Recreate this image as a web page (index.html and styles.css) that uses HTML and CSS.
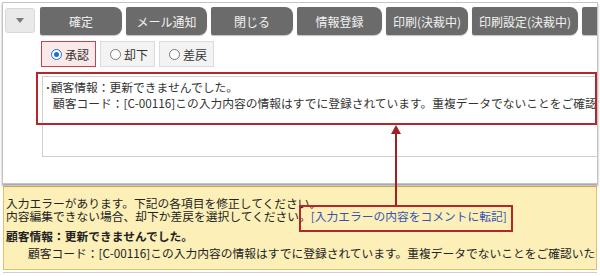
FILE: index.html
```html
<!DOCTYPE html>
<html lang="ja">
<head>
  <meta charset="UTF-8">
  <title>承認</title>
  <link rel="stylesheet" href="styles.css">
</head>
<body>
  <div class="page">
    <div class="panel">
      <div class="toolbar">
        <button class="menu-toggle" type="button">
          <svg width="8" height="5" viewBox="0 0 8 5"><path d="M0 0h8L4 5z" fill="#7a7a7a"/></svg>
        </button>
        <button class="action w-82" type="button">確定</button>
        <button class="action w-81" type="button">メール通知</button>
        <button class="action w-82" type="button">閉じる</button>
        <button class="action w-85" type="button">情報登録</button>
        <button class="action w-82" type="button">印刷(決裁中)</button>
        <button class="action w-106" type="button">印刷設定(決裁中)</button>
        <button class="action w-82" type="button">差戻</button>
      </div>

      <div class="decision">
        <label class="choice is-checked"><span class="radio"></span>承認</label>
        <label class="choice"><span class="radio"></span>却下</label>
        <label class="choice"><span class="radio"></span>差戻</label>
      </div>

      <div class="comment">
        <p>･顧客情報：更新できませんでした。</p>
        <p class="indent">顧客コード：[C-00116]この入力内容の情報はすでに登録されています。重複データでないことをご確認いただけますか。</p>
      </div>
    </div>

    <div class="notice">
      <p class="notice-lead">入力エラーがあります。下記の各項目を修正してください。<br>内容編集できない場合、却下か差戻を選択してください。<a class="copy-link" href="#">[入力エラーの内容をコメントに転記]</a></p>
      <p class="notice-detail"><strong>顧客情報：更新できませんでした。</strong><br><span class="indent">顧客コード：[C-00116]この入力内容の情報はすでに登録されています。重複データでないことをご確認いただけますか。</span></p>
    </div>

    <div class="next-panel"></div>

    <!-- annotation overlay -->
    <div class="callout callout-comment"></div>
    <div class="callout callout-link"></div>
    <div class="callout-line"></div>
    <div class="callout-head"></div>
  </div>
</body>
</html>
```

FILE: styles.css
```css
body {
  margin: 0;
  background: #fff;
  color: #333;
  font-family: "Noto Sans CJK JP", "Noto Sans", sans-serif;
  font-size: 11.75px;
  overflow: hidden;
}

p {
  margin: 0;
}

.page {
  position: relative;
  width: 600px;
  height: 276px;
  overflow: hidden;
}

.panel {
  box-sizing: border-box;
  width: 596px;
  height: 182px;
  margin: 2px 0 0 2px;
  border: 1px solid #c4c4c4;
  box-shadow: 0 2px 2px rgba(0, 0, 0, 0.35);
  overflow: hidden;
  position: relative;
}

.toolbar {
  display: flex;
  align-items: flex-start;
  gap: 4px;
  padding: 4px 0 0 2px;
  white-space: nowrap;
}

.menu-toggle {
  flex: none;
  width: 30px;
  height: 25px;
  margin: 1px 1px 0 0;
  padding: 0;
  border: 1px solid #d8d8d8;
  border-radius: 3px;
  background: #e9e9e9;
  display: flex;
  align-items: center;
  justify-content: center;
}

.action {
  flex: none;
  height: 28px;
  padding: 0;
  border: none;
  border-radius: 2px 8px 8px 2px;
  background: #6b6b6b;
  color: #f2f2f2;
  font-family: inherit;
  font-size: 12px;
  box-shadow: 0 1px 1px rgba(0, 0, 0, 0.25);
}

.w-81 { width: 81px; }
.w-82 { width: 82px; }
.w-85 { width: 85px; }
.w-106 { width: 106px; }

.decision {
  display: flex;
  gap: 4px;
  margin-top: 6px;
  padding-left: 38px;
}

.choice {
  box-sizing: border-box;
  width: 55px;
  height: 26px;
  display: flex;
  align-items: center;
  gap: 3px;
  padding-left: 9px;
  border: 1px solid #dcdcdc;
  background: #f3f3f3;
  font-size: 12px;
  color: #333;
}

.choice.is-checked {
  border-color: #c9434a;
  background: #fbe8e8;
}

.radio {
  box-sizing: border-box;
  width: 11px;
  height: 11px;
  border: 1px solid #777;
  border-radius: 50%;
  background: #fff;
  position: relative;
}

.is-checked .radio {
  border-color: #1f6fd6;
}

.is-checked .radio::after {
  content: "";
  position: absolute;
  top: 2px;
  left: 2px;
  width: 5px;
  height: 5px;
  border-radius: 50%;
  background: #1f6fd6;
}

.comment {
  box-sizing: border-box;
  width: 600px;
  height: 81px;
  margin: 9px 0 0 39px;
  padding: 2px 0 0 2px;
  border: 1px solid #cfcfcf;
  line-height: 16px;
  white-space: nowrap;
  color: #333;
}

.comment .indent {
  padding-left: 8px;
}

.notice {
  box-sizing: border-box;
  width: 594px;
  height: 84px;
  margin: 2px 0 0 3px;
  padding: 9px 0 0 2px;
  border: 1px solid #e3c068;
  background: #fcf0b8;
  white-space: nowrap;
  overflow: hidden;
  color: #222;
}

.notice-lead {
  line-height: 13px;
}

.notice-detail {
  margin-top: 5px;
  line-height: 17px;
}

.notice-detail strong {
  font-weight: bold;
}

.notice-detail .indent {
  padding-left: 22px;
}

.copy-link {
  color: #3454b4;
  text-decoration: none;
}

.next-panel {
  margin: 2px 3px 0 3px;
  border-top: 1px solid #cfcfcf;
}

/* red annotation marks over the screenshot */
.callout {
  position: absolute;
  box-sizing: border-box;
  border: 2px solid #b3262a;
}

.callout-comment {
  left: 36px;
  top: 72px;
  width: 561px;
  height: 53px;
}

.callout-link {
  left: 299px;
  top: 205px;
  width: 214px;
  height: 27px;
}

.callout-line {
  position: absolute;
  left: 395px;
  top: 132px;
  width: 2px;
  height: 74px;
  background: #a21f24;
}

.callout-head {
  position: absolute;
  left: 391px;
  top: 125px;
  width: 0;
  height: 0;
  border-left: 5px solid transparent;
  border-right: 5px solid transparent;
  border-bottom: 9px solid #a21f24;
}
```
